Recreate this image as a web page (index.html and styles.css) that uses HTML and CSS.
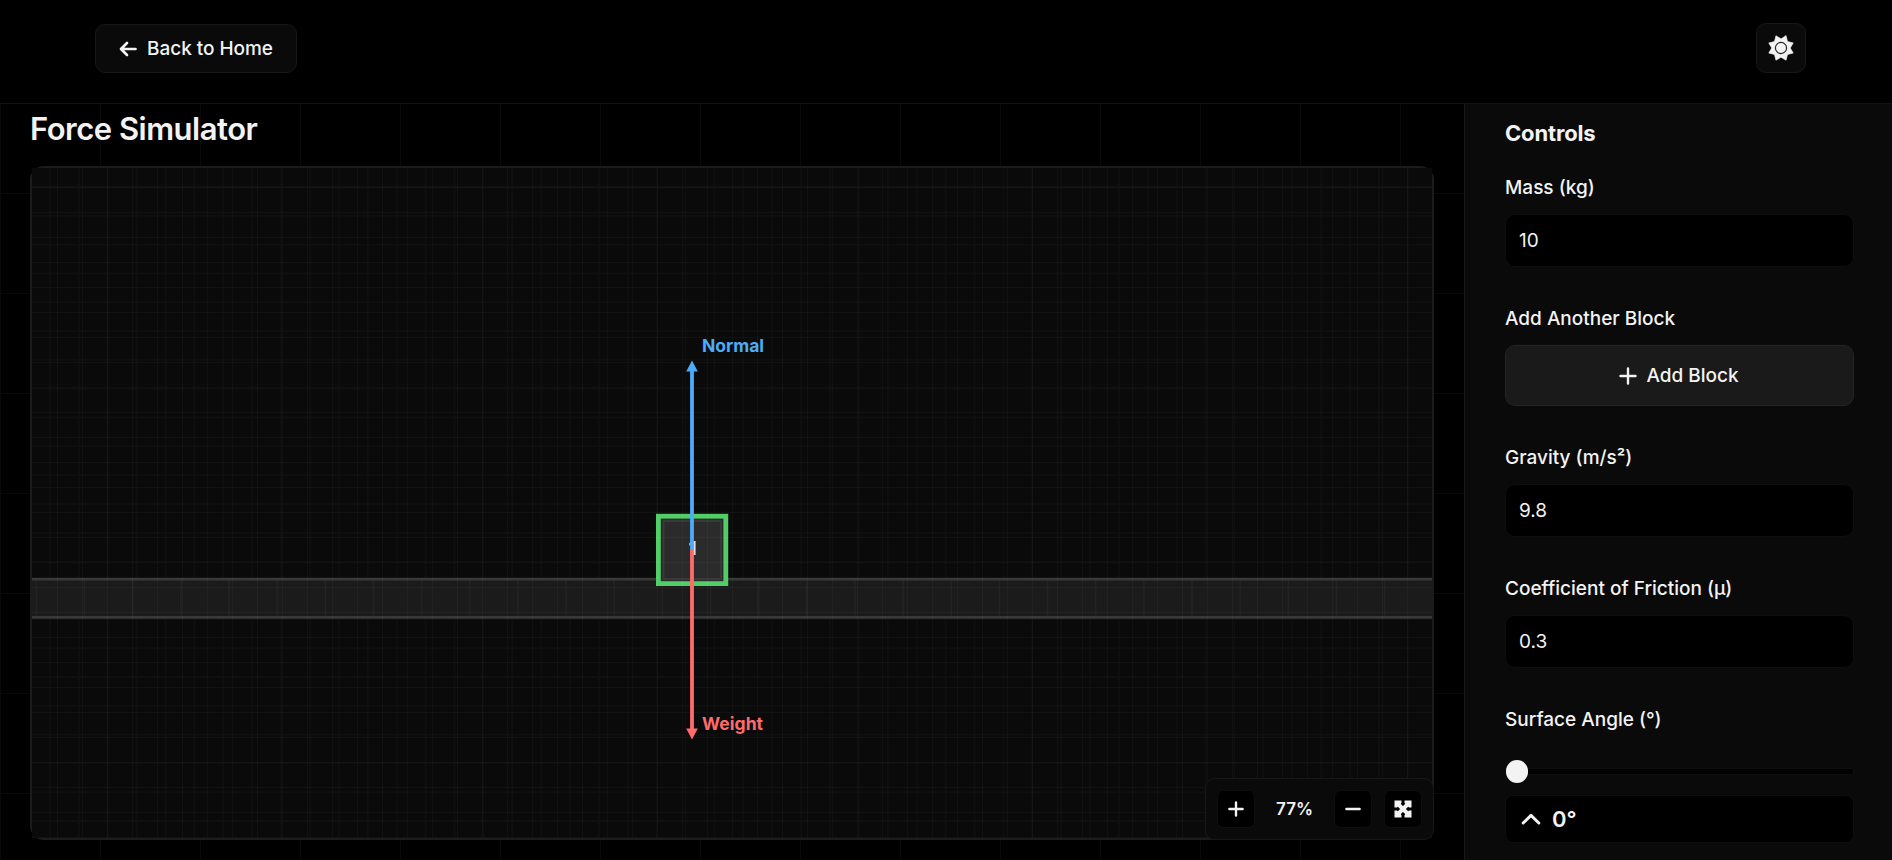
FILE: index.html
```html
<!DOCTYPE html>
<html lang="en">
<head>
<meta charset="utf-8">
<title>Force Simulator</title>
<link rel="stylesheet" href="styles.css">
</head>
<body>
<header class="topbar">
  <a class="btn back"><svg width="18" height="16" viewBox="0 0 18 16"><path d="M8 2 L2 8 L8 14 M2.3 8 H16.5"/></svg><span>Back to Home</span></a>
  <button class="btn theme"><svg width="28" height="28" viewBox="-13.3 -13.3 26.6 26.6"><path class="sun" d="M4.8-11.6 6.2-6.2 11.6-4.8 8.8 0 11.6 4.8 6.2 6.2 4.8 11.6 0 8.8-4.8 11.6-6.2 6.2-11.6 4.8-8.8 0-11.6-4.8-6.2-6.2-4.8-11.6 0-8.8Z"/><circle class="ring" r="5.3"/></svg></button>
</header>
<div class="layout">
  <main class="stage">
    <h1>Force Simulator</h1>
    <div class="frame">
      <svg class="scene" width="1400" height="670" viewBox="32 168 1400 670">
        <path id="world" class="world"/>
        <rect x="32" y="579" width="1400" height="38" fill="#1b1b1b"/>
        <path id="ground" class="ground"/>
        <path d="M32 579.2H1432M32 617.3H1432" stroke="#393939" stroke-width="2.8"/>
        <rect x="658.4" y="516.2" width="67.4" height="67.4" fill="#2b2b2b" stroke="#51cf66" stroke-width="4.8"/>
        <rect x="663.5" y="521" width="57.5" height="58" fill="none" stroke="#393939" stroke-width="2"/>
        <path id="fine" class="fine"/>
        <text x="692.5" y="555" class="mass">1</text>
        <path d="M692 550V368" stroke="#4dabf7" stroke-width="3.8"/>
        <path d="M692 360.5 697.8 371.5H686.2Z" fill="#4dabf7"/>
        <path d="M692 550V730" stroke="#ff6b6b" stroke-width="3.8"/>
        <path d="M692 739.5 697.8 728.5H686.2Z" fill="#ff6b6b"/>
        <text x="702" y="352" class="force" fill="#4dabf7" textLength="62">Normal</text>
        <text x="702" y="729.5" class="force" fill="#ff6b6b" textLength="61">Weight</text>
      </svg>
      <div class="zoombar">
        <button class="zb"><svg width="16" height="16" viewBox="0 0 16 16"><path d="M8 1.4V14.6M1.4 8H14.6"/></svg></button>
        <span class="pct">77%</span>
        <button class="zb"><svg width="16" height="16" viewBox="0 0 16 16"><path d="M1.4 8H14.6"/></svg></button>
        <button class="zb"><svg width="18" height="18" viewBox="0 0 18 18"><path class="cross" d="M4 4 14 14M14 4 4 14"/><path class="solid" d="M.5.5H7.5V3L3 7.5H.5ZM17.5.5V7.5H15L10.5 3V.5ZM.5 17.5V10.5H3L7.5 15V17.5ZM17.5 17.5H10.5V15L15 10.5H17.5Z"/></svg></button>
      </div>
    </div>
  </main>
  <aside class="controls">
    <h2>Controls</h2>
    <label>Mass (kg)</label>
    <div class="input">10</div>
    <label>Add Another Block</label>
    <button class="add"><svg width="18" height="18" viewBox="0 0 18 18"><path d="M9 1.5V16.5M1.5 9H16.5"/></svg>Add Block</button>
    <label>Gravity (m/s²)</label>
    <div class="input">9.8</div>
    <label>Coefficient of Friction (μ)</label>
    <div class="input">0.3</div>
    <label>Surface Angle (°)</label>
    <div class="slider"><i class="knob"></i></div>
    <div class="angle"><svg width="20" height="14" viewBox="0 0 20 14"><path d="M2.2 11 10 3.4 17.8 11"/></svg>0°</div>
  </aside>
</div>
<script src="grid.js"></script>
</body>
</html>
```
FILE: grid.js
```js
// Builds grid line paths for the simulator scene.
const LEFT = 32, RIGHT = 1432, TOP = 168, BOTTOM = 838;

function gridPath(x0, dx, y0, dy, top, bottom) {
  let d = "";
  for (let x = x0; x < RIGHT; x += dx) d += `M${x.toFixed(2)} ${top}V${bottom}`;
  if (dy) for (let y = y0; y < bottom; y += dy) d += `M${LEFT} ${y.toFixed(2)}H${RIGHT}`;
  return d;
}

document.getElementById("fine").setAttribute("d", gridPath(57.5, 25, 187.5, 25, TOP, BOTTOM));
document.getElementById("world").setAttribute("d", gridPath(50, 28.89, 187, 28.82, TOP, BOTTOM));
document.getElementById("ground").setAttribute("d", gridPath(36.4, 48.15, 0, 0, 579, 617));
```
FILE: styles.css
```css
* { box-sizing: border-box; }
body {
  margin: 0;
  height: 860px;
  overflow: hidden;
  display: flex;
  flex-direction: column;
  background: #000;
  color: #f3f3f3;
  font-family: Inter, "Liberation Sans", sans-serif;
}
button { font: inherit; color: inherit; padding: 0; }
svg { display: block; flex: none; }
.btn path, .zb path, .add path, .angle path { stroke-linecap: round; stroke-linejoin: round; }
.topbar {
  height: 104px;
  flex: none;
  display: flex;
  justify-content: space-between;
  align-items: flex-start;
  padding: 23px 86px 0 95px;
  border-bottom: 1px solid #121212;
}
.btn {
  display: flex;
  align-items: center;
  justify-content: center;
  background: #0a0a0a;
  border: 1px solid #181818;
  border-radius: 10px;
}
.back {
  width: 202px;
  height: 49px;
  margin-top: 1px;
  gap: 10px;
  font-size: 19px;
  font-weight: 500;
  letter-spacing: -.05px;
}
.back svg path { fill: none; stroke: #f3f3f3; stroke-width: 2.7; }
.theme { width: 50px; height: 50px; }
.sun { fill: #f3f3f3; stroke: #f3f3f3; stroke-width: .6; }
.ring { fill: #f3f3f3; stroke: #222; stroke-width: 1.1; }
.layout { flex: 1; display: flex; min-height: 0; }
.stage {
  width: 1464px;
  padding: 6px 30px 20px;
  background-image: linear-gradient(90deg, #0a0a0a 1px, transparent 1px), linear-gradient(#0a0a0a 1px, transparent 1px);
  background-size: 100px 100px;
  background-position: 0 -11px;
}
h1 { margin: 0 0 18px; height: 38px; font-size: 31px; line-height: 37px; font-weight: 600; letter-spacing: -.5px; white-space: nowrap; }
.frame {
  position: relative;
  width: 1404px;
  height: 674px;
  border: 2px solid #1c1c1c;
  border-radius: 14px;
}
.scene { background: #0a0a0a; }
.world { stroke: #fff; stroke-opacity: .024; stroke-width: 1.9; }
.fine { stroke: #fff; stroke-opacity: .03; stroke-width: 1; }
.ground { stroke: #fff; stroke-opacity: .035; stroke-width: 1.6; }
.force { font-size: 17.5px; font-weight: 700; }
.mass { font-size: 19px; font-weight: 700; fill: #ddd; text-anchor: middle; }
.zoombar {
  position: absolute;
  right: -2px;
  bottom: -2px;
  width: 229px;
  height: 62px;
  display: flex;
  align-items: center;
  padding: 0 11px;
  background: #0a0a0a;
  border: 1px solid #181818;
  border-radius: 10px;
}
.zb {
  width: 38px;
  height: 38px;
  flex: none;
  display: flex;
  align-items: center;
  justify-content: center;
  background: #000;
  border: 1px solid #0e0e0e;
  border-radius: 7px;
}
.zb + .zb { margin-left: 12px; }
.zb path { fill: none; stroke: #f3f3f3; stroke-width: 2.4; }
.zb .cross { stroke-width: 4; }
.zb .solid { fill: #f3f3f3; stroke: none; }
.pct { width: 79px; text-align: center; font-size: 17px; font-weight: 600; }
.controls {
  flex: 1;
  padding: 16px 38px 0 40px;
  background: #0a0a0a;
  border-left: 1px solid #181818;
}
h2 { margin: 0; height: 27px; line-height: 27px; font-size: 22px; font-weight: 700; letter-spacing: -.15px; }
label { display: block; height: 24px; line-height: 24px; margin-top: 40px; font-size: 19px; font-weight: 500; }
h2 + label { margin-top: 29px; }
.input {
  height: 53px;
  margin-top: 14px;
  padding-left: 13px;
  line-height: 51px;
  font-size: 19px;
  background: #000;
  border: 1px solid #0e0e0e;
  border-radius: 10px;
}
.add {
  width: 100%;
  height: 61px;
  margin-top: 14px;
  padding-right: 1px;
  display: flex;
  align-items: center;
  justify-content: center;
  gap: 9px;
  font-size: 19px;
  font-weight: 500;
  background: #1a1a1a;
  border: 1px solid #242424;
  border-radius: 10px;
}
.add path { fill: none; stroke: #f3f3f3; stroke-width: 2.4; }
.slider {
  position: relative;
  height: 7px;
  margin-top: 36px;
  background: #000;
  border: 1px solid #0e0e0e;
  border-radius: 3px;
}
.knob { position: absolute; left: 0; top: -9px; width: 22px; height: 23px; border-radius: 11px; background: #f3f3f3; }
.angle {
  height: 48px;
  margin-top: 20px;
  display: flex;
  align-items: center;
  gap: 11px;
  padding-left: 15px;
  font-size: 22px;
  font-weight: 600;
  background: #000;
  border: 1px solid #0e0e0e;
  border-radius: 8px;
}
.angle path { fill: none; stroke: #f3f3f3; stroke-width: 3; }
```
